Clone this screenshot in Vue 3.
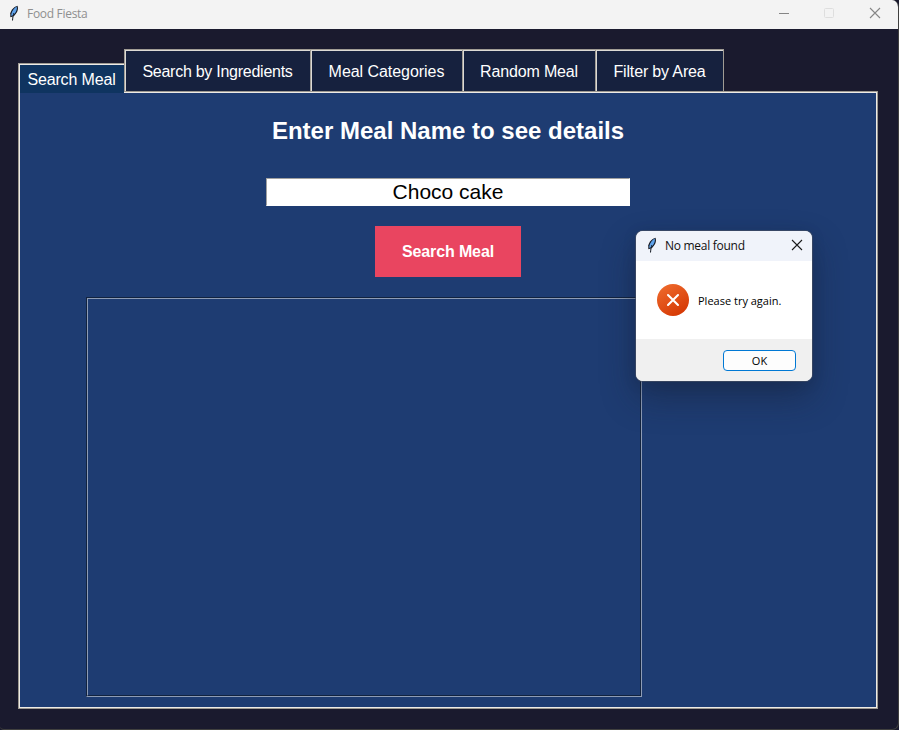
<script setup>
import { ref } from 'vue'

const tabs = [
  { label: 'Search by Ingredients', key: 'ingredients' },
  { label: 'Meal Categories', key: 'categories' },
  { label: 'Random Meal', key: 'random' },
  { label: 'Filter by Area', key: 'area' },
]
const meal = ref('Choco cake')
</script>

<template>
  <div class="window">
    <header class="titlebar">
      <svg class="feather" width="16" height="16" viewBox="0 0 16 16">
        <path d="M11.500.7C8.300 1.500 5.200 4.500 4.300 8.300L4.300 12.300 7.500 11.200C10.700 8.600 13 4.400 11.500.7Z" fill="#10151f" />
        <path d="M10.700 1.500C8.300 3 6.200 5.600 5.300 9L5.300 11 7.300 10.300C9.800 7.800 11.600 4.600 10.700 1.500Z" fill="#5fa2ea" />
        <path d="M8 8C7.200 10 6.800 12 6.500 15.500" fill="none" stroke="#10151f" stroke-width="1" />
      </svg>
      <span class="app-name">Food Fiesta</span>
      <div class="controls">
        <svg width="12" height="12" viewBox="0 0 12 12"><path d="M1 6.500h10" stroke="#858585" /></svg>
        <svg class="maximize" width="12" height="12" viewBox="0 0 12 12"><rect x="1.500" y="1.500" width="9" height="9" rx="1" fill="none" stroke="#dedede" /></svg>
        <svg width="12" height="12" viewBox="0 0 12 12"><path d="M1 1l10 10M11 1L1 11" stroke="#868686" stroke-width="1.100" /></svg>
      </div>
    </header>

    <main class="body">
      <nav class="tabs">
        <div class="tab active"><span>Search Meal</span></div>
        <div v-for="t in tabs" :key="t.key" class="tab" :class="t.key"><span>{{ t.label }}</span></div>
      </nav>
      <section class="panel">
        <h1>Enter Meal Name to see details</h1>
        <input v-model="meal" class="entry" type="text" spellcheck="false" />
        <button class="search">Search Meal</button>
        <div class="results"><div class="results-inner"></div></div>
      </section>
    </main>

    <div class="dialog">
      <div class="dialog-title">
        <svg class="feather" width="16" height="16" viewBox="0 0 16 16">
          <path d="M11.500.7C8.300 1.500 5.200 4.500 4.300 8.300L4.300 12.300 7.500 11.200C10.700 8.600 13 4.400 11.500.7Z" fill="#10151f" />
          <path d="M10.700 1.500C8.300 3 6.200 5.600 5.300 9L5.300 11 7.300 10.300C9.800 7.800 11.600 4.600 10.700 1.500Z" fill="#5fa2ea" />
          <path d="M8 8C7.200 10 6.800 12 6.500 15.500" fill="none" stroke="#10151f" stroke-width="1" />
        </svg>
        <span class="dialog-name">No meal found</span>
        <svg class="dialog-close" width="12" height="12" viewBox="0 0 12 12"><path d="M1 1l10 10M11 1L1 11" stroke="#1b1b1b" stroke-width="1.100" /></svg>
      </div>
      <div class="dialog-body">
        <svg width="32" height="32" viewBox="0 0 32 32">
          <defs>
            <linearGradient id="err" x1="0.200" y1="0" x2="0.800" y2="1">
              <stop offset="0" stop-color="#ee6a2c" />
              <stop offset="1" stop-color="#d43602" />
            </linearGradient>
          </defs>
          <circle cx="16" cy="16" r="16" fill="url(#err)" />
          <path d="M11 11l10 10M21 11L11 21" stroke="#fff" stroke-width="2.100" stroke-linecap="round" />
        </svg>
        <span class="message">Please try again.</span>
      </div>
      <div class="dialog-foot"><button class="ok"><span>OK</span></button></div>
    </div>
  </div>
</template>

<style>
body { background: #1a1a2e; overflow: hidden; }
</style>

<style scoped>
* { box-sizing: border-box; }
.window {
  position: relative;
  width: 899px;
  height: 730px;
  background: #1a1a2e;
  border-right: 1px solid #40403f;
  border-bottom: 1px solid #40403f;
  border-radius: 0 7px 7px 4px;
  overflow: hidden;
  font-family: "Liberation Sans", Arial, sans-serif;
}
.titlebar {
  height: 29px;
  display: flex;
  align-items: flex-start;
  background: #f3f3f3;
  padding: 5px 17px 0 6px;
}
.feather { flex: none; display: block; }
.app-name {
  margin-left: 5px;
  font: 12px/18px "Open Sans", "Noto Sans", sans-serif;
  color: #8f8f8f;
  letter-spacing: -0.3px;
}
.controls { margin-left: auto; display: flex; gap: 33px; padding-top: 2px; }
.controls svg { display: block; }
.controls .maximize { margin-right: 1px; }

.body { padding: 20px 20px 0 18px; }
.tabs { display: flex; align-items: flex-end; height: 42px; }
.tab {
  display: flex;
  align-items: center;
  justify-content: center;
  height: 42px;
  background: #16213e;
  border: solid #a09c94;
  border-width: 1px 0 0 1px;
  box-shadow: inset 1px 1px #dcdad5;
  color: #fff;
  font-size: 16px;
  letter-spacing: -0.15px;
  white-space: nowrap;
}
.tab span { position: relative; top: 1px; }
.ingredients { width: 186px; letter-spacing: -0.26px; }
.categories { width: 152px; letter-spacing: -0.05px; }
.random { width: 133px; }
.area { width: 129px; border-right-width: 1px; }
.active {
  width: 106px;
  height: 30px;
  margin-bottom: -2px;
  background: #0f3460;
  box-shadow: inset 1px 1px #eeebe7;
  z-index: 1;
}
.panel {
  height: 618px;
  width: 860px;
  border: 1px solid #9e9a91;
  box-shadow: inset 0 0 0 1px #eeebe7;
  background: #1e3c72;
  display: flex;
  flex-direction: column;
  align-items: center;
}
h1 {
  margin: 25px 0 0;
  font-size: 24px;
  line-height: 28px;
  font-weight: 700;
  color: #fff;
  white-space: nowrap;
}
.entry {
  width: 364px;
  height: 28px;
  margin-top: 33px;
  padding: 0;
  border: 1px solid #fff;
  border-top-color: #a0a0a0;
  border-left-color: #a0a0a0;
  background: #fff;
  color: #000;
  font: 21px/26px "Liberation Sans", Arial, sans-serif;
  text-align: center;
  outline: none;
}
.search {
  width: 146px;
  height: 51px;
  margin-top: 20px;
  padding: 0;
  border: 0;
  background: #e94560;
  color: #fff;
  font: 700 16px/20px "Liberation Sans", Arial, sans-serif;
  letter-spacing: -0.13px;
}
.results {
  align-self: flex-start;
  width: 556px;
  height: 400px;
  margin: 20px 0 0 67px;
  border: 1px solid;
  border-color: #12233f #8e9cb5 #8e9cb5 #12233f;
}
.results-inner {
  height: 100%;
  border: 1px solid;
  border-color: #8e9cb5 #12233f #12233f #8e9cb5;
}
.dialog {
  position: absolute;
  left: 636px;
  top: 231px;
  width: 176px;
  height: 150px;
  border-radius: 7px;
  background: #fff;
  overflow: hidden;
  display: flex;
  flex-direction: column;
  box-shadow: 0 0 0 1px rgba(70, 80, 100, 0.650), 0 16px 34px rgba(22, 30, 50, 0.450), 0 2px 14px rgba(22, 30, 50, 0.150);
  font-family: "Open Sans", "Noto Sans", sans-serif;
}
.dialog-title {
  height: 30px;
  display: flex;
  align-items: flex-start;
  padding: 6px 9px 0 8px;
  background: #f0f3fa;
}
.dialog-name { margin-left: 5px; font-size: 12px; line-height: 18px; color: #101010; white-space: nowrap; letter-spacing: -0.28px; }
.dialog-close { margin: 2px 0 0 auto; }
.dialog-body { height: 78px; display: flex; align-items: center; padding-left: 21px; }
.message { margin-left: 9px; font-size: 11px; line-height: 16px; color: #000; white-space: nowrap; padding-top: 2px; }
.dialog-foot {
  flex: 1;
  display: flex;
  justify-content: flex-end;
  padding: 11px 16px 0 0;
  background: #f0f0f0;
}
.ok {
  width: 73px;
  height: 21px;
  padding: 1px 0 0;
  border: 1px solid #0078d4;
  border-radius: 4px;
  background: #fdfdfd;
  color: #000;
  font: 11px/18px "Open Sans", "Noto Sans", sans-serif;
}
</style>
